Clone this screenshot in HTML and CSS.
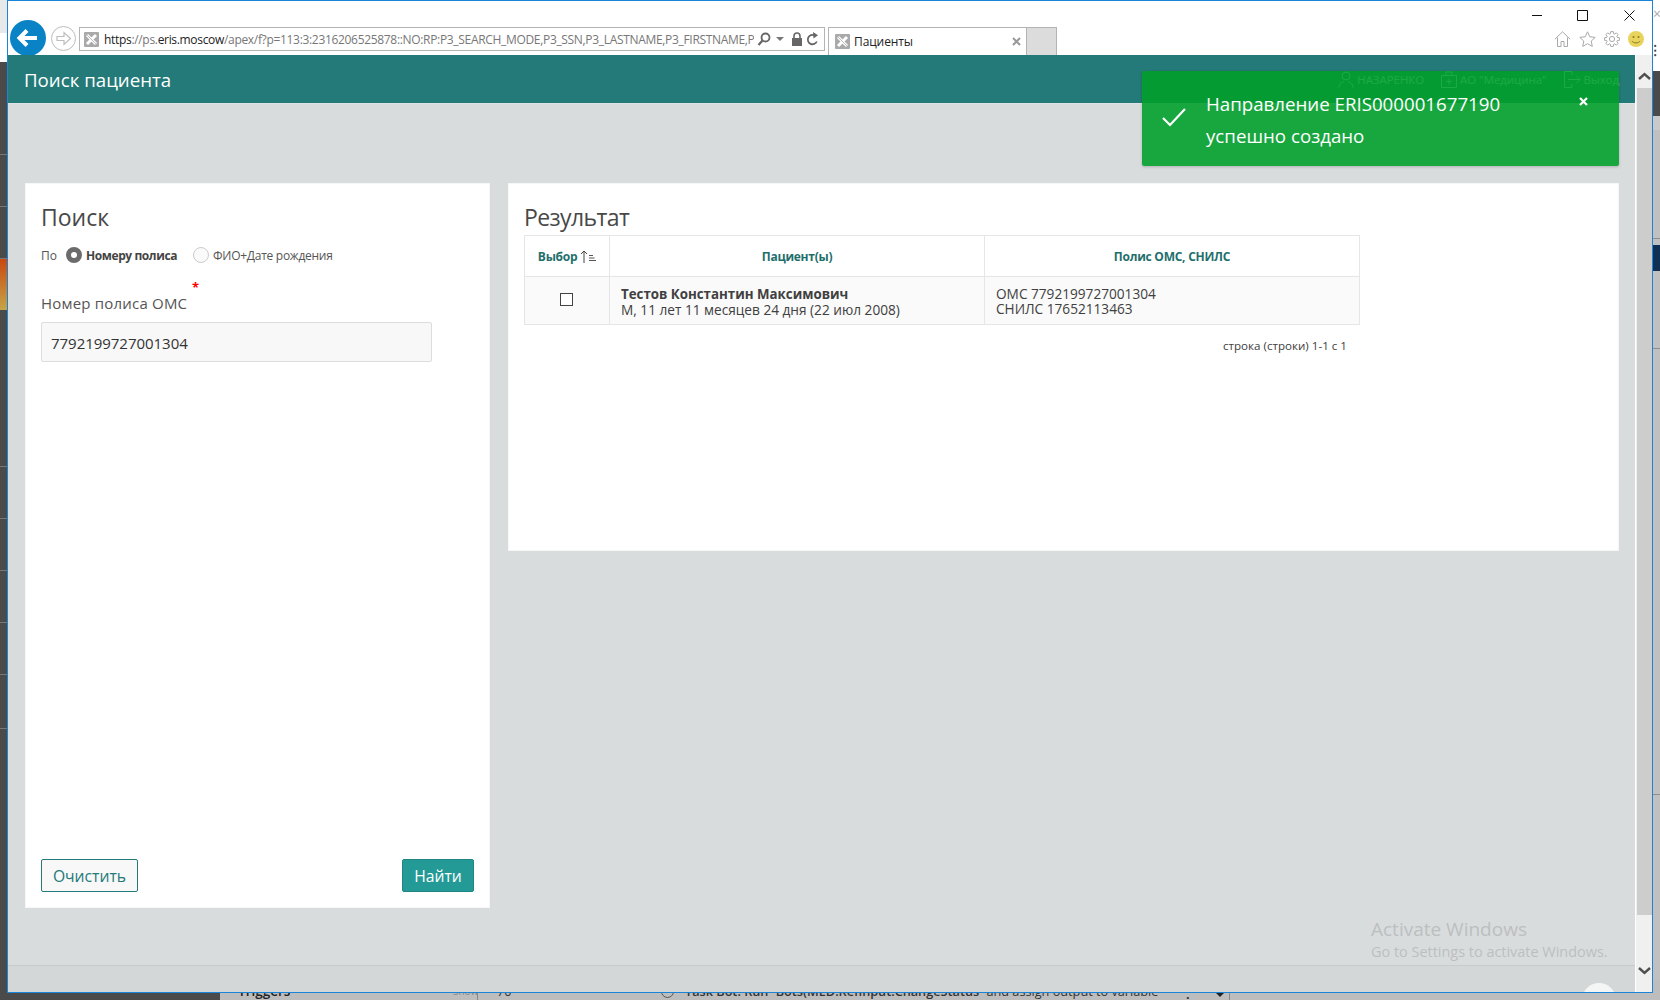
FILE: index.html
```html
<!DOCTYPE html>
<html lang="ru">
<head>
<meta charset="utf-8">
<title>Пациенты</title>
<link rel="stylesheet" href="styles.css">
</head>
<body>
<div class="desktop">
  <div class="bg-left">
    <div class="bgl-top"></div>
    <div class="bgl-tile t1"></div>
    <div class="bgl-tile t4"></div>
    <div class="bgl-tile t4"></div>
    <div class="bgl-orange"></div>
    <div class="bgl-tile t3"></div>
    <div class="bgl-tile t4"></div>
    <div class="bgl-tile t4"></div>
    <div class="bgl-tile t4"></div>
    <div class="bgl-tile t4"></div>
    <div class="bgl-tile t5"></div>
  </div>
  <div class="bg-right">
    <div class="bgr-top">×</div>
    <div class="bgr-dots">⁝</div>
    <div class="bgr-dark"></div>
    <div class="bgr-light"></div>
    <div class="bgr-line l1"></div>
    <div class="bgr-navy"></div>
    <div class="bgr-line l2"></div>
    <div class="bgr-line l3"></div>
  </div>
  <div class="bg-bottom">
    <div class="bgb-dark"></div>
    <div class="bgb-row">
      <span class="bgb-trig">Triggers</span>
      <span class="bgb-small">Show</span>
      <span class="bgb-num">70</span>
      <span class="bgb-circle"></span>
      <span class="bgb-task"><b>Task Bot: Run `Bots(MED.Refinput.ChangeStatus`</b> and assign output to variable</span>
      <span class="bgb-dot">.</span>
      <span class="bgb-tri"></span>
      <span class="bgb-sep"></span>
    </div>
  </div>

  <div class="window">
    <div class="chrome">
      <div class="titlebar">
        <svg class="wc wc-min" width="10" height="10" viewBox="0 0 10 10"><path d="M0 5.500h10" stroke="#111" fill="none"/></svg>
        <svg class="wc wc-max" width="11" height="11" viewBox="0 0 11 11"><path d="M.5.5h10v10H.5z" stroke="#111" fill="none"/></svg>
        <svg class="wc wc-close" width="11" height="11" viewBox="0 0 11 11"><path d="M.5.5l10 10M10.500.5l-10 10" stroke="#111" fill="none"/></svg>
      </div>
      <div class="toolbar">
        <svg class="back" width="36" height="36" viewBox="0 0 36 36"><circle cx="18" cy="18" r="18" fill="#0a83c6"/><path d="M27 18H10M17 10.500L9.500 18l7.500 7.500" stroke="#fff" stroke-width="4" fill="none"/></svg>
        <svg class="forward" width="25" height="25" viewBox="0 0 25 25"><circle cx="12.500" cy="12.500" r="12" fill="#fff" stroke="#bdbdbd"/><path d="M6 10.500h7V6.500l6.500 6-6.500 6v-4H6z" fill="none" stroke="#bdbdbd" stroke-width="1.200"/></svg>
        <div class="address">
          <svg class="fav" width="15" height="15" viewBox="0 0 15 15"><rect width="15" height="15" rx="1" fill="#a9a9a9"/><path d="M3 3l9 9M12 3l-9 9" stroke="#fff" stroke-width="3"/><path d="M3 3l9 9" stroke="#a9a9a9" stroke-width=".8"/></svg>
          <span class="url"><span class="host">https</span>://ps.<span class="host">eris.moscow</span>/apex/f?p=113:3:2316206525878::NO:RP:P3_SEARCH_MODE,P3_SSN,P3_LASTNAME,P3_FIRSTNAME,P</span>
          <svg class="addr-ic" width="14" height="14" viewBox="0 0 14 14"><circle cx="8.500" cy="5.500" r="4" fill="none" stroke="#666" stroke-width="1.800"/><path d="M5.500 8.500L1.500 13" stroke="#666" stroke-width="2.200"/></svg>
          <span class="addr-drop"></span>
          <svg class="addr-ic lock" width="12" height="14" viewBox="0 0 12 14"><path d="M3 6V4a3 3 0 0 1 6 0v2" fill="none" stroke="#666" stroke-width="1.600"/><rect x="1" y="6" width="10" height="8" fill="#666"/></svg>
          <svg class="addr-ic" width="13" height="14" viewBox="0 0 13 14"><path d="M10.800 9.500A4.700 4.700 0 1 1 8.500 3.300" fill="none" stroke="#666" stroke-width="1.800"/><path d="M7 0l5 3.200L7.500 6.500z" fill="#666"/></svg>
        </div>
        <div class="tab">
          <svg class="fav" width="15" height="15" viewBox="0 0 15 15"><rect width="15" height="15" rx="1" fill="#a9a9a9"/><path d="M3 3l9 9M12 3l-9 9" stroke="#fff" stroke-width="3"/><path d="M3 3l9 9" stroke="#a9a9a9" stroke-width=".8"/></svg>
          <span class="tab-title">Пациенты</span>
          <svg class="tab-x" width="9" height="9" viewBox="0 0 9 9"><path d="M1 1l7 7M8 1l-7 7" stroke="#999" stroke-width="2"/></svg>
        </div>
        <div class="newtab"></div>
        <div class="tools">
          <svg width="17" height="16" viewBox="0 0 17 16"><path d="M.8 8.300L8.500 .8l7.700 7.500M3.500 6.500v9h3.500v-5h3v5h3.500v-9" fill="none" stroke="#a8a8a8"/></svg>
          <svg width="17" height="16" viewBox="0 0 17 16"><path d="M8.500.8l2.300 5 5.400.6-4 3.700 1.100 5.300-4.800-2.700-4.800 2.700 1.100-5.300-4-3.700 5.400-.6z" fill="none" stroke="#a8a8a8"/></svg>
          <svg width="16" height="16" viewBox="0 0 16 16"><circle cx="8" cy="8" r="2.600" fill="none" stroke="#a8a8a8"/><path d="M13.260 6.390L15.390 6.700V9.300L13.260 9.610L12.860 10.580L14.140 12.300L12.300 14.140L10.580 12.860L9.610 13.260L9.300 15.390H6.700L6.390 13.260L5.420 12.860L3.700 14.140L1.860 12.300L3.140 10.580L2.740 9.610L.61 9.300V6.700L2.740 6.390L3.140 5.420L1.860 3.700L3.700 1.860L5.420 3.140L6.390 2.740L6.700 .61H9.300L9.610 2.740L10.580 3.140L12.300 1.860L14.140 3.700L12.860 5.420Z" fill="none" stroke="#a8a8a8"/></svg>
          <svg width="16" height="16" viewBox="0 0 16 16"><circle cx="8" cy="8" r="8" fill="#e8d35c"/><circle cx="5.500" cy="6" r="1" fill="#8a7a20"/><circle cx="10.500" cy="6" r="1" fill="#8a7a20"/><path d="M4 10c1 2.500 7 2.500 8 0" fill="none" stroke="#8a7a20"/></svg>
        </div>
      </div>
    </div>

    <div class="page">
      <div class="main">
        <header class="app-header">
          <h1 class="app-title">Поиск пациента</h1>
          <nav class="app-nav">
            <span class="nav-item"><svg width="16" height="17" viewBox="0 0 16 17"><circle cx="8" cy="5" r="4" fill="none" stroke="#fff"/><path d="M1 16.500c0-4 3-5 5-6M15 16.500c0-4-3-5-5-6" fill="none" stroke="#fff"/></svg>НАЗАРЕНКО</span>
            <span class="nav-item"><svg width="16" height="17" viewBox="0 0 16 17"><path d="M.5 4.500h15v12H.5zM5 4.500V1h6v3.500M8 7.500v6M5 10.500h6" fill="none" stroke="#fff"/></svg>АО "Медицина"</span>
            <span class="nav-item"><svg width="17" height="17" viewBox="0 0 17 17"><path d="M8 4V.5H.5v16H8V13M4 8.500h12M12.500 5l3.500 3.500-3.500 3.500" fill="none" stroke="#fff"/></svg>Выход</span>
          </nav>
        </header>
        <div class="content">
          <section class="card card-search">
            <h2 class="card-title">Поиск</h2>
            <div class="radio-row">
              <span class="radio-by">По</span>
              <span class="radio on"></span>
              <span class="radio-label strong">Номеру полиса</span>
              <span class="radio"></span>
              <span class="radio-label">ФИО+Дате рождения</span>
            </div>
            <label class="field-label">Номер полиса ОМС<span class="req">*</span></label>
            <div class="input">7792199727001304</div>
            <div class="actions">
              <button class="btn btn-ghost">Очистить</button>
              <button class="btn btn-primary">Найти</button>
            </div>
          </section>
          <section class="card card-result">
            <h2 class="card-title">Результат</h2>
            <table class="grid">
              <thead>
                <tr>
                  <th class="col-sel">Выбор <svg class="sort" width="16" height="13" viewBox="0 0 16 13"><path d="M4 13V1M1 4l3-3 3 3" fill="none" stroke="#444"/><path d="M9 5.500h4M9 8h5.500M9 10.500h7" stroke="#555"/></svg></th>
                  <th class="col-wide">Пациент(ы)</th>
                  <th class="col-wide">Полис ОМС, СНИЛС</th>
                </tr>
              </thead>
              <tbody>
                <tr>
                  <td class="cell-check"><span class="checkbox"></span></td>
                  <td><b class="name">Тестов Константин Максимович</b><br>М, 11 лет 11 месяцев 24 дня (22 июл 2008)</td>
                  <td>ОМС 7792199727001304<br>СНИЛС 17652113463</td>
                </tr>
              </tbody>
            </table>
            <div class="pager">строка (строки) 1-1 с 1</div>
          </section>
        </div>
        <footer class="app-footer"></footer>
      </div>
      <div class="scrollbar">
        <svg class="sb-arrow" width="13" height="8" viewBox="0 0 13 8"><path d="M1 7l5.500-5L12 7" fill="none" stroke="#505050" stroke-width="2.400"/></svg>
        <div class="sb-thumb"></div>
        <div class="sb-rest"></div>
        <svg class="sb-arrow" width="13" height="8" viewBox="0 0 13 8"><path d="M1 1l5.500 5L12 1" fill="none" stroke="#505050" stroke-width="2.400"/></svg>
      </div>
    </div>

    <div class="toast">
      <svg class="toast-check" width="26" height="20" viewBox="0 0 26 20"><path d="M2 11l7 7L24 2" fill="none" stroke="#fff" stroke-width="2.200"/></svg>
      <div class="toast-text">Направление ERIS000001677190<br>успешно создано</div>
      <svg class="toast-x" width="9" height="9" viewBox="0 0 9 9"><path d="M1 1l7 7M8 1l-7 7" stroke="#fff" stroke-width="2.200"/></svg>
    </div>
    <div class="watermark">
      <div class="wm-1">Activate Windows</div>
      <div class="wm-2">Go to Settings to activate Windows.</div>
    </div>
    <div class="fab"></div>
  </div>
</div>
</body>
</html>
```
FILE: styles.css
```css
* { box-sizing: border-box; }
html, body { margin: 0; padding: 0; }
body { font-family: "Open Sans", "Liberation Sans", sans-serif; color: #404040; background: #bdbdbd; }
.desktop { position: relative; width: 1660px; height: 1000px; overflow: hidden; background: #bdbdbd; }

/* desktop behind the window */
.bg-left { position: absolute; left: 0; top: 0; width: 7px; height: 1000px; background: #4a4a4a; display: flex; flex-direction: column; }
.bgl-top { height: 62px; flex: none; background: linear-gradient(#e6e8ea 0 33px, #fff 33px); }
.bgl-tile { border-bottom: 1px solid #777; background: #4a4a4a; flex: none; }
.t1 { height: 93px; }
.bgl-orange { height: 51px; flex: none; background: linear-gradient(#c9480f, #c6a548); }
.t3 { height: 157px; }
.t4 { height: 52px; }
.t5 { height: 54px; }

.bg-right { position: absolute; left: 1653px; top: 0; width: 7px; height: 1000px; background: #c0c0c0; display: flex; flex-direction: column; }
.bgr-top { height: 33px; background: #fff; color: #aaa; font-size: 14px; line-height: 28px; }
.bgr-dots { height: 38px; background: #fff; color: #444; font-size: 16px; line-height: 34px; overflow: hidden; }
.bgr-dark { height: 45px; background: #4a4a4a; }
.bgr-light { height: 14px; background: #c9c9c9; }
.bgr-line { background: #8e8e8e; height: 1px; }
.l1 { margin-top: 108px; }
.bgr-navy { height: 26px; background: #0f2f55; margin-top: 6px; }
.l2 { margin-top: 77px; }
.l3 { margin-top: 445px; }

.bg-bottom { position: absolute; left: 0; bottom: 0; width: 1660px; height: 20px; display: flex; }
.bgb-dark { width: 220px; background: #4a4a4a; flex: none; }
.bgb-row { flex: 1; background: #bdbdbd; display: flex; align-items: flex-end; font-size: 12.7px; color: #333; padding-left: 18px; height: 20px; }
.bgb-trig { font-size: 13.5px; font-weight: 600; line-height: 18px; width: 215px; color: #222; flex: none; }
.bgb-small { width: 24px; font-size: 10px; color: #888; line-height: 18px; flex: none; }
.bgb-num { width: 184px; padding-left: 19px; line-height: 13px; border-left: 1px solid #888; height: 20px; padding-top: 5px; flex: none; }
.bgb-circle { width: 13px; height: 13px; border: 1px solid #555; border-radius: 50%; margin: 0 11px 2px 0; flex: none; }
.bgb-task { line-height: 18px; width: 501px; white-space: nowrap; flex: none; }
.bgb-task b { font-weight: 600; }
.bgb-dot { width: 30px; font-weight: 700; line-height: 12px; flex: none; }
.bgb-tri { width: 0; height: 0; border: 4px solid transparent; border-top-color: #222; margin-bottom: -1px; flex: none; }
.bgb-sep { width: 1px; height: 20px; background: #888; margin-left: 5px; flex: none; }

/* browser window */
.window { position: absolute; left: 7px; top: 0; width: 1646px; height: 993px; border: 1px solid #1a84d8; background: #fff; display: flex; flex-direction: column; overflow: hidden; }
.chrome { height: 54px; flex: none; background: #fff; overflow: hidden; display: flex; flex-direction: column; }
.titlebar { height: 25px; flex: none; display: flex; justify-content: flex-end; align-items: flex-start; padding: 9px 17px 0 0; }
.wc { display: block; }
.wc-min { margin-right: 35px; }
.wc-max { margin-right: 36px; }
.toolbar { height: 29px; flex: none; display: flex; align-items: flex-start; padding-left: 2px; padding-right: 8px; }
.back { margin-top: -6px; flex: none; }
.forward { margin: 0 0 0 5px; flex: none; }
.address { margin: 1px 0 0 3px; width: 746px; height: 24px; border: 1px solid #b4b4b4; display: flex; align-items: center; padding: 0 0 0 4px; flex: none; overflow: hidden; }
.fav { flex: none; display: block; }
.url { font-size: 12px; letter-spacing: -.32px; color: #777; margin-left: 5px; white-space: nowrap; width: 650px; flex: none; overflow: hidden; }
.host { color: #222; }
.addr-ic { display: block; flex: none; margin-left: 3px; }
.addr-drop { width: 0; height: 0; border: 4px solid transparent; border-top-color: #777; border-bottom-width: 0; margin: 0 4px 0 5px; flex: none; }
.lock { margin-right: 0; }
.tab { margin: 1px 0 0 3px; width: 199px; height: 28px; border: 1px solid #b4b4b4; border-bottom: 0; display: flex; align-items: center; padding: 0 4px 0 6px; flex: none; }
.tab-title { font-size: 12px; color: #222; margin-left: 4px; flex: 1; letter-spacing: -.1px; }
.tab-x { display: block; margin-right: 1px; }
.newtab { margin-top: 1px; width: 30px; height: 28px; background: #dcdcdc; border: 1px solid #b4b4b4; border-left: 0; border-bottom: 0; flex: none; }
.tools { margin-left: auto; margin-top: 5px; display: flex; align-items: center; gap: 8px; }
.tools svg { display: block; }

/* page */
.page { flex: 1; display: flex; min-height: 0; }
.main { flex: 1; min-width: 0; display: flex; flex-direction: column; background: #d9dcdd; }
.app-header { height: 49px; flex: none; background: #247a78; display: flex; align-items: center; justify-content: space-between; padding: 1px 16px 0 16px; border-bottom: 1px solid #dfe3e3; }
.app-title { margin: 0; font-size: 18.7px; font-weight: 400; color: #fff; line-height: 24px; }
.app-nav { display: flex; gap: 17px; color: #fff; font-size: 11.4px; }
.nav-item { display: flex; align-items: center; gap: 3px; }
.nav-item svg { display: block; }
.content { flex: 1; min-height: 0; display: flex; align-items: flex-start; gap: 18px; padding: 79px 16px 0 17px; }
.card { background: #fff; border: 1px solid #f5f6f6; padding: 17px 15px 15px; display: flex; flex-direction: column; }
.card-search { width: 465px; height: 725px; flex: none; }
.card-result { flex: 1; height: 368px; }
.card-title { margin: 0 0 2px; font-size: 23px; font-weight: 400; line-height: 32px; color: #484848; }
.card-result .card-title { letter-spacing: -.6px; }
.radio-row { margin-top: 10px; height: 20px; display: flex; align-items: center; font-size: 12px; color: #555; white-space: nowrap; }
.radio-by { width: 25px; flex: none; }
.radio { width: 16px; height: 16px; border-radius: 50%; border: 1px solid #ccc; background: #fafafa; flex: none; }
.radio.on { border: 5px solid #6b6b6b; background: #fff; }
.radio-label { margin-left: 4px; flex: none; letter-spacing: -.27px; }
.radio-label.strong { font-weight: 700; color: #444; width: 107px; margin-left: 4px; letter-spacing: -.42px; }
.field-label { position: relative; margin-top: 26px; height: 24px; line-height: 24px; font-size: 15px; letter-spacing: .2px; color: #555; align-self: flex-start; }
.req { position: absolute; right: -12px; top: -13px; color: #f00; font-size: 13px; font-weight: 700; line-height: 18px; }
.input { margin-top: 7px; width: 391px; height: 40px; background: #f8f8f8; border: 1px solid #ddd; border-radius: 2px; padding-left: 9px; font-size: 15px; line-height: 40px; color: #333; letter-spacing: -.03px; }
.actions { margin-top: auto; display: flex; justify-content: space-between; }
.btn { height: 33px; font: 400 15.7px "Open Sans", sans-serif; border-radius: 2px; padding: 0; }
.btn-ghost { width: 97px; background: #f8f8f8; border: 1px solid #247a78; color: #247a78; }
.btn-primary { width: 72px; background: #239a96; border: 1px solid #1f8683; color: #fff; }
.grid { width: 836px; border-collapse: collapse; table-layout: fixed; font-size: 13.65px; line-height: 15px; color: #404040; }
.grid th { height: 41px; border: 1px solid #e4e6e7; color: #1f6f6c; font-size: 12px; font-weight: 700; text-align: center; padding: 0; letter-spacing: -.25px; }
.grid td { height: 48px; border: 1px solid #e4e6e7; background: #fafafa; padding: 1px 11px 0; }
.col-sel { width: 85px; }
.sort { vertical-align: -2px; }
.name { font-weight: 700; font-size: 13.3px; }
.cell-check { text-align: center; }
.grid td.cell-check { padding: 0; }
.checkbox { display: inline-block; width: 13px; height: 13px; border: 1px solid #444; background: #fff; vertical-align: 1px; margin-right: 2px; }
.pager { margin-top: 12px; padding-right: 13px; width: 836px; text-align: right; font-size: 11.6px; line-height: 18px; color: #404040; }
.app-footer { height: 27px; flex: none; background: #d4d7d8; border-top: 1px solid #c8cbcc; }

.scrollbar { width: 17px; flex: none; background: #f0f0f0; display: flex; flex-direction: column; align-items: center; padding-top: 17px; border-left: 1px solid #fff; }
.sb-arrow { display: block; flex: none; }
.sb-thumb { width: 15px; height: 827px; margin-top: 8px; background: #cdcdcd; flex: none; }
.sb-rest { flex: 1; }
.scrollbar > .sb-arrow:last-child { margin-bottom: 17px; }

/* overlays */
.toast { position: absolute; left: 1134px; top: 70px; width: 477px; height: 95px; border-radius: 2px; background: rgba(0,160,43,.89); box-shadow: 0 1px 3px rgba(0,0,0,.2); display: flex; }
.toast-check { position: absolute; left: 19px; top: 36px; }
.toast-text { margin: 17px 0 0 64px; font-size: 18.7px; line-height: 32px; color: #fff; white-space: nowrap; }
.toast-x { position: absolute; right: 31px; top: 26px; }
.watermark { position: absolute; left: 1363px; top: 914px; color: #bcbfc0; white-space: nowrap; }
.wm-1 { font-size: 19px; line-height: 28px; }
.wm-2 { font-size: 14.45px; line-height: 18px; }
.fab { position: absolute; left: 1574px; top: 982px; width: 34px; height: 34px; border-radius: 50%; background: #f4f5f5; }
```
